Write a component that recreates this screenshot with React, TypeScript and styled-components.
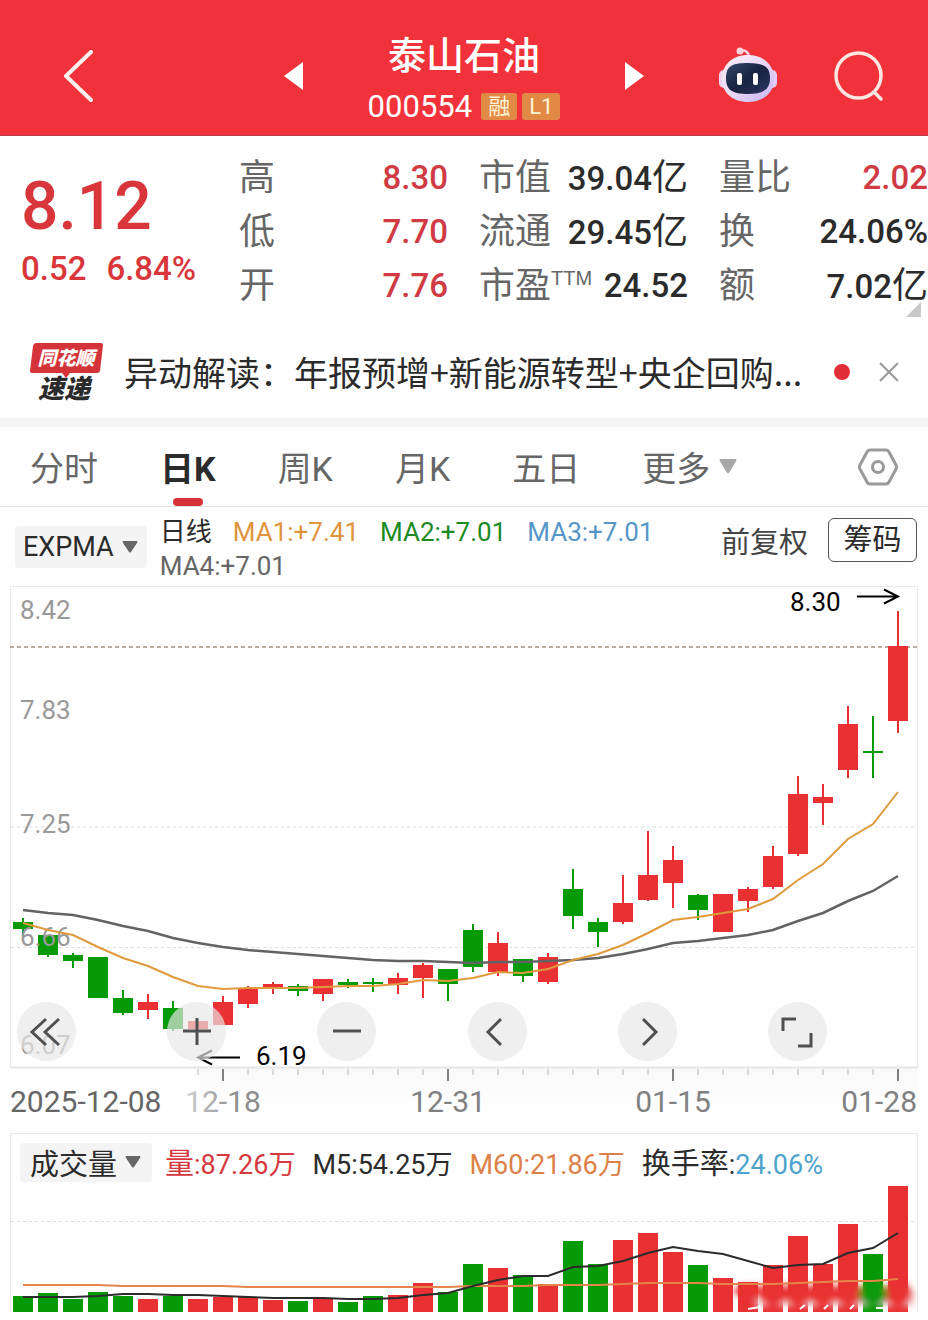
import React from "react";
import styled, { createGlobalStyle, css } from "styled-components";

const UP = "#e93033";
const DOWN = "#079a07";
const GREY = "#666666";
const INK = "#2b2b2b";

const GlobalStyle = createGlobalStyle`
  *, *::before, *::after { box-sizing: border-box; }
  body { margin: 0; background: #fefefe; color: ${INK}; font-family: Roboto, "Noto Sans CJK SC", sans-serif; }
  button { margin: 0; padding: 0; border: 0; background: none; color: inherit; font: inherit; cursor: pointer; }
  h1, dl, dd, dt, p { margin: 0; font-weight: inherit; }
  svg { display: block; }
`;

/* ---------- header ---------- */

const Header = styled.header`
  display: grid;
  grid-template-columns: 1fr auto 1fr;
  align-items: center;
  height: 136px;
  padding: 16px 44px 0 62px;
  background: #f2323a;
  border-bottom: 1px solid #b8424a;
  color: #fff;
`;

const HeaderSide = styled.div<{ $end?: boolean }>`
  display: flex;
  align-items: center;
  gap: 56px;
  justify-content: ${(p) => (p.$end ? "flex-end" : "flex-start")};
`;

const HeaderCentre = styled.div`
  display: flex;
  align-items: center;
  gap: 64px;
  margin-right: 18px;
`;

const StockHeading = styled.div`
  display: flex;
  flex-direction: column;
  align-items: center;
  padding-top: 12px;
`;

const StockName = styled.h1`
  font-size: 38px;
  font-weight: 500;
  line-height: 50px;
`;

const StockCode = styled.div`
  display: flex;
  align-items: center;
  gap: 5px;
  font-size: 31px;
  line-height: 52px;
`;

const CodeText = styled.span`
  margin-right: 4px;
`;

const Tag = styled.span`
  min-width: 36px;
  padding: 0 7px;
  border-radius: 3px;
  background: #e08a45;
  color: #fff3d6;
  font-size: 22px;
  line-height: 27px;
  text-align: center;
`;

/* ---------- quote ---------- */

const Quote = styled.section`
  position: relative;
  display: grid;
  grid-template-columns: 187px 1fr 1fr 1fr;
  gap: 31px;
  padding: 15px 0 13px 21px;
`;

const PriceBlock = styled.div`
  padding-top: 20px;
  color: #d9363b;
`;

const Price = styled.p`
  font-size: 66px;
  font-weight: 500;
  line-height: 72px;
`;

const Change = styled.p`
  display: flex;
  gap: 20px;
  font-size: 33px;
  font-weight: 500;
  line-height: 52px;
  white-space: nowrap;
`;

const StatColumn = styled.dl`
  min-width: 0;
`;

const StatRow = styled.div`
  display: flex;
  justify-content: space-between;
  align-items: center;
  height: 54px;
  white-space: nowrap;
`;

const StatLabel = styled.dt`
  display: flex;
  color: ${GREY};
  font-size: 36px;
  line-height: 54px;
`;

const Superscript = styled.sup`
  font-family: "Liberation Sans", sans-serif;
  font-size: 20px;
  line-height: 38px;
`;

const StatValue = styled.dd<{ $up?: boolean }>`
  color: ${(p) => (p.$up ? "#d03a42" : INK)};
  font-size: 33px;
  font-weight: 500;
  line-height: 54px;
`;

const Unit = styled.span`
  font-size: 36px;
  font-weight: 400;
`;

const ExpandCorner = styled.svg`
  position: absolute;
  right: 7px;
  bottom: 9px;
`;

/* ---------- news ---------- */

const News = styled.section`
  display: flex;
  align-items: center;
  height: 92px;
  padding: 0 28px 0 29px;
`;

const NewsLogo = styled.svg`
  flex: none;
`;

const NewsLink = styled.a`
  flex: 1;
  min-width: 0;
  margin-left: 20px;
  overflow: hidden;
  color: ${INK};
  font-family: "Noto Sans CJK SC", sans-serif;
  font-size: 34px;
  line-height: 50px;
  text-decoration: none;
  white-space: nowrap;
`;

const UnreadDot = styled.span`
  flex: none;
  width: 16px;
  height: 16px;
  margin: 0 28px 0 20px;
  border-radius: 50%;
  background: #e22f36;
`;

/* ---------- period tabs ---------- */

const Tabs = styled.nav`
  display: flex;
  align-items: center;
  gap: 62px;
  height: 89px;
  padding: 0 30px;
  border-top: 9px solid #f5f5f5;
  border-bottom: 1px solid #e2e2e2;
`;

const Tab = styled.button<{ $active?: boolean }>`
  position: relative;
  display: flex;
  align-items: center;
  gap: 9px;
  height: 79px;
  color: ${GREY};
  font-size: 34px;
  white-space: nowrap;
  ${(p) =>
    p.$active &&
    css`
      color: ${INK};
      font-weight: 700;
      &::after {
        content: "";
        position: absolute;
        left: 50%;
        bottom: 0;
        width: 30px;
        height: 8px;
        margin-left: -15px;
        border-radius: 4px;
        background: #d5333a;
      }
    `}
`;

const SettingsButton = styled.button`
  margin-left: auto;
`;

/* ---------- indicator bar ---------- */

const IndicatorBar = styled.div`
  display: flex;
  align-items: center;
  height: 79px;
  padding: 0 11px 0 15px;
`;

const Picker = styled.button`
  display: flex;
  flex: none;
  align-items: center;
  gap: 8px;
  border-radius: 4px;
  background: #f4f4f4;
  color: ${INK};
`;

const ExpmaPicker = styled(Picker)`
  height: 42px;
  padding: 0 9px 0 8px;
  font-size: 27px;
`;

const VolumePicker = styled(Picker)`
  height: 39px;
  padding: 0 11px 0 10px;
  font-size: 29px;
`;

const Averages = styled.div`
  display: flex;
  flex: 1;
  flex-wrap: wrap;
  column-gap: 21px;
  margin-left: 13px;
  padding-top: 4px;
  font-size: 26px;
  line-height: 34px;
`;

const Reading = styled.span<{ $color: string }>`
  color: ${(p) => p.$color};
  white-space: nowrap;
`;

const ChartActions = styled.div`
  display: flex;
  align-items: center;
  align-self: flex-start;
  gap: 20px;
  margin-top: 11px;
  font-size: 29px;
`;

const Adjust = styled.button`
  color: #444;
`;

const ChipsButton = styled.button`
  width: 89px;
  height: 44px;
  border: 1px solid #555;
  border-radius: 6px;
  line-height: 42px;
`;

/* ---------- charts ---------- */

const PricePanel = styled.section`
  position: relative;
  margin: 0 10px;
`;

const Plot = styled.svg`
  width: 100%;
  height: auto;
`;

const ChartControls = styled.div`
  position: absolute;
  top: 416px;
  left: 7px;
  right: 91px;
  display: flex;
  justify-content: space-between;
`;

const RoundButton = styled.button`
  display: flex;
  align-items: center;
  justify-content: center;
  width: 59px;
  height: 59px;
  border-radius: 50%;
  background: rgba(232, 232, 232, 0.68);
`;

const VolumePanel = styled.section`
  margin: 0 10px 8px;
  border: 1px solid #e8e8e8;
  border-bottom: 0;
`;

const VolumeLegend = styled.div`
  display: flex;
  align-items: center;
  gap: 13px;
  height: 54px;
  padding: 2px 9px 0;
  white-space: nowrap;
`;

const VolumeReadings = styled.div`
  display: flex;
  align-items: baseline;
  gap: 17px;
  padding-bottom: 3px;
  font-size: 27px;
`;

const ReadingLabel = styled.span`
  font-size: 29px;
`;

/* Candle rows in plot units: [open/close top, bottom, high, low, direction] */
type Candle = [number, number, number, number, 0 | 1];

const candles: Candle[] = [
  [922, 929, 918, 936, 0], [935, 955, 935, 957, 0], [955, 961, 953, 968, 0], [957, 998, 957, 998, 0],
  [998, 1013, 990, 1015, 0], [1002, 1010, 994, 1019, 1], [1008, 1029, 1001, 1031, 0], [1021, 1029, 1021, 1029, 1],
  [1002, 1025, 996, 1025, 1], [989, 1004, 986, 1008, 1], [984, 987, 982, 994, 1], [986, 991, 984, 996, 0],
  [979, 994, 979, 1001, 1], [982, 985, 979, 988, 0], [982, 984, 978, 992, 0], [978, 985, 973, 994, 1],
  [965, 978, 963, 998, 1], [969, 984, 969, 1001, 0], [930, 967, 924, 972, 0], [943, 972, 932, 976, 1],
  [959, 976, 959, 982, 0], [957, 982, 953, 984, 1], [889, 916, 869, 929, 0], [922, 932, 918, 947, 0],
  [903, 922, 875, 924, 1], [875, 900, 831, 901, 1], [860, 883, 846, 908, 1], [895, 910, 894, 920, 0],
  [894, 932, 894, 932, 1], [889, 901, 887, 912, 1], [856, 887, 846, 889, 1], [794, 854, 776, 856, 1],
  [797, 803, 784, 825, 1], [724, 770, 706, 778, 1], [751, 753, 716, 778, 0], [646, 721, 611, 733, 1],
];

const fastLine = [
  923, 930, 935, 947, 958, 966, 977, 986, 989, 988, 988, 988, 987, 986, 986, 984, 980, 981, 978, 972, 973, 969, 960,
  954, 945, 933, 920, 917, 913, 909, 899, 880, 864, 839, 824, 792,
];
const slowLine = [
  910, 913, 915, 920, 926, 931, 938, 943, 947, 950, 952, 954, 956, 958, 960, 961, 961, 962, 963, 962, 962, 961, 960,
  958, 954, 949, 943, 941, 938, 935, 930, 921, 913, 901, 891, 876,
];
const volumeTops = [
  1296, 1293, 1299, 1292, 1296, 1299, 1296, 1299, 1297, 1297, 1300, 1301, 1298, 1302, 1296, 1295, 1283, 1292, 1264,
  1268, 1275, 1284, 1241, 1264, 1240, 1233, 1252, 1265, 1278, 1282, 1265, 1236, 1264, 1224, 1254, 1186,
];
const volumeFast = [
  1297, 1297, 1297, 1296, 1294, 1294, 1295, 1295, 1296, 1297, 1298, 1298, 1298, 1299, 1299, 1298, 1295, 1293, 1286,
  1280, 1276, 1276, 1267, 1266, 1261, 1253, 1247, 1251, 1254, 1261, 1268, 1265, 1264, 1253, 1248, 1233,
];
const volumeSlow = [
  1285, 1285, 1285, 1285, 1286, 1286, 1286, 1286, 1286, 1287, 1287, 1287, 1287, 1287, 1287, 1287, 1287, 1287, 1286,
  1286, 1286, 1285, 1285, 1285, 1284, 1283, 1283, 1283, 1284, 1284, 1284, 1283, 1282, 1281, 1281, 1279,
];

const slotX = (i: number) => Math.round(22.5 + 25.015 * i);
const toPoints = (ys: number[]) => ys.map((y, i) => `${slotX(i)},${y}`).join(" ");

const priceLabels: [string, number][] = [["8.42", 619], ["7.83", 719], ["7.25", 833], ["6.66", 946], ["6.07", 1054]];
const dateLabels: [string, number, "start" | "middle" | "end", string][] = [
  ["2025-12-08", 10, "start", "#666"],
  ["12-18", 223, "middle", "url(#dateFade)"],
  ["12-31", 448, "middle", "#808080"],
  ["01-15", 673, "middle", "#808080"],
  ["01-28", 917, "end", "#808080"],
];
const majorTicks = [8, 17, 26, 35];
const digits = 'Roboto, "Noto Sans CJK SC", sans-serif';

function PriceChart() {
  return (
    <Plot viewBox="10 586 908 547" role="img" aria-label="日K线图">
      <defs>
        <linearGradient id="axisShade" x1="0" x2="0" y1="0" y2="1">
          <stop offset="0" stopColor="#f9f9f9" />
          <stop offset="1" stopColor="#fefefe" />
        </linearGradient>
        <linearGradient id="dateFade" x1="0" x2="1" y1="0" y2="0">
          <stop offset="0" stopColor="#cfcfcf" />
          <stop offset="0.7" stopColor="#8c8c8c" />
        </linearGradient>
      </defs>
      <rect x="200" y="1068" width="718" height="40" fill="url(#axisShade)" />
      <path d="M10.5 1068V586.5H917.5V1068" fill="none" stroke="#e8e8e8" />
      <path d="M10 1067.5H918" stroke="#e6e6e6" strokeWidth="2" />
      <path d="M11 827H917M11 947.5H917" stroke="#dedede" strokeDasharray="3 3" />
      {candles.map(([top, bottom, high, low, up], i) => (
        <g key={i} fill={up ? UP : DOWN}>
          <rect x={slotX(i) - 1} y={high} width="2" height={low - high} />
          <rect x={slotX(i) - 10} y={top} width="20" height={bottom - top} />
        </g>
      ))}
      {priceLabels.map(([label, y]) => (
        <text key={label} x="20" y={y} fontFamily={digits} fontSize="26" fill="#999">
          {label}
        </text>
      ))}
      <path d="M10 647H917" stroke="#b8aba0" strokeWidth="2" strokeDasharray="4 3" />
      <rect x="888" y="646" width="20" height="75" fill={UP} />
      <polyline points={toPoints(slowLine)} fill="none" stroke="#636363" strokeWidth="2.5" />
      <polyline points={toPoints(fastLine)} fill="none" stroke="#e09a3e" strokeWidth="2" />
      <g fontFamily={digits} fontSize="26" fill="#000">
        <text x="790" y="611">8.30</text>
        <text x="256" y="1065">6.19</text>
      </g>
      <path d="M857 596.5H897M884 589.5L898 596.5L884 603.5M240 1057.5H199M212 1050.5L198 1057.5L212 1064.5" fill="none" stroke="#000" strokeWidth="2" />
      {candles.map((_, i) =>
        i < 7 ? null : (
          <path
            key={i}
            d={`M${slotX(i)} 1069v${majorTicks.includes(i) ? 12 : 6}`}
            stroke={majorTicks.includes(i) ? "#808080" : "#b5b5b5"}
            strokeWidth={majorTicks.includes(i) ? 2 : 1}
          />
        ),
      )}
      {dateLabels.map(([label, x, anchor, fill]) => (
        <text key={label} x={x} y="1112" textAnchor={anchor} fontFamily={digits} fontSize="30" fill={fill}>
          {label}
        </text>
      ))}
    </Plot>
  );
}

function VolumeChart() {
  return (
    <Plot viewBox="11 1188 906 124" role="img" aria-label="成交量" overflow="visible">
      <defs>
        <filter id="soften" x="-20%" y="-40%" width="140%" height="180%">
          <feGaussianBlur stdDeviation="3" />
        </filter>
      </defs>
      <path d="M11 1221.5H917" stroke="#dedede" strokeDasharray="3 3" />
      {volumeTops.map((top, i) => (
        <rect key={i} x={slotX(i) - 10} y={top} width="20" height={1312 - top} fill={candles[i][4] ? UP : DOWN} />
      ))}
      <g filter="url(#soften)">
        <path d="M755 1300L915 1290V1306H755Z" fill="#f3d8d8" />
        {[748, 773, 798, 823, 848, 898, 873].map((x) => (
          <ellipse key={x} cx={x} cy={x === 748 ? 1291 : 1294} rx="14" ry={x === 748 ? 6 : 12} fill={x === 873 ? DOWN : UP} />
        ))}
      </g>
      <path d="M748 1309l12-2M800 1309l5-4M824 1309l4-4M850 1309l4-4M876 1308l12 0" stroke="#fff" strokeWidth="2" fill="none" />
      <polyline points={toPoints(volumeSlow)} fill="none" stroke="#e5854c" strokeWidth="2" />
      <polyline points={toPoints(volumeFast)} fill="none" stroke="#2b2b2b" strokeWidth="2" />
    </Plot>
  );
}

function Caret({ width, height, color }: { width: number; height: number; color: string }) {
  return (
    <svg width={width} height={height} viewBox="0 0 16 12" preserveAspectRatio="none" aria-hidden="true">
      <path d="M1 0H15Q16 0 15 2L9 11Q8 12 7 11L1 2Q0 0 1 0Z" fill={color} />
    </svg>
  );
}

function Robot() {
  return (
    <svg width="60" height="58" viewBox="0 0 60 58" aria-hidden="true">
      <defs>
        <linearGradient id="shell" x1="0" y1="0" x2="1" y2="1">
          <stop offset="0" stopColor="#fff0f6" />
          <stop offset="0.5" stopColor="#e9d8f5" />
          <stop offset="1" stopColor="#c5b4f5" />
        </linearGradient>
        <linearGradient id="visor" x1="0" y1="0" x2="1" y2="1">
          <stop offset="0" stopColor="#36466b" />
          <stop offset="0.5" stopColor="#17233f" />
          <stop offset="1" stopColor="#2d3666" />
        </linearGradient>
      </defs>
      <path d="M22 4Q30 2 31 10" fill="none" stroke="#ffd3de" strokeWidth="2.5" />
      <circle cx="22" cy="4" r="3.5" fill="#ffd3de" />
      <rect x="1" y="23" width="10" height="18" rx="5" fill="#f0d3ee" />
      <rect x="49" y="23" width="10" height="18" rx="5" fill="#e3cdf5" />
      <path d="M30 8C46 8 56 18 56 32S45 55 30 55S4 46 4 32S14 8 30 8Z" fill="url(#shell)" />
      <path d="M30 16C46 16 52 20 52 31S46 47 30 47S8 43 8 31S14 16 30 16Z" fill="url(#visor)" />
      <rect x="19" y="26" width="5" height="12" rx="2" fill="#fff" />
      <rect x="35" y="26" width="5" height="12" rx="2" fill="#fff" />
    </svg>
  );
}

const controls: [string, string][] = [
  ["最早", "M33 8L19 21L33 34M20 8L6 21L20 34"],
  ["放大", "M21 7V34M7 20H35"],
  ["缩小", "M7 20H35"],
  ["向左", "M25 8L12 21L25 34"],
  ["向右", "M17 8L30 21L17 34"],
  ["全屏", "M7 20V8H20M22 35H35V22"],
];

type Stat = { label: string; sup?: string; value: string; unit?: string; up?: boolean };

const stats: Stat[][] = [
  [
    { label: "高", value: "8.30", up: true },
    { label: "低", value: "7.70", up: true },
    { label: "开", value: "7.76", up: true },
  ],
  [
    { label: "市值", value: "39.04", unit: "亿" },
    { label: "流通", value: "29.45", unit: "亿" },
    { label: "市盈", sup: "TTM", value: "24.52" },
  ],
  [
    { label: "量比", value: "2.02", up: true },
    { label: "换", value: "24.06%" },
    { label: "额", value: "7.02", unit: "亿" },
  ],
];

export default function App() {
  return (
    <>
      <GlobalStyle />
      <Header>
        <HeaderSide>
          <button aria-label="返回">
            <svg width="32" height="52" viewBox="0 0 32 52">
              <path d="M29 2L4 26L29 50" fill="none" stroke="#fff0ee" strokeWidth="4" strokeLinecap="round" strokeLinejoin="round" />
            </svg>
          </button>
        </HeaderSide>
        <HeaderCentre>
          <button aria-label="上一只">
            <svg width="20" height="30" viewBox="0 0 20 30">
              <path d="M19 1V29L0 15Z" fill="#fff" />
            </svg>
          </button>
          <StockHeading>
            <StockName>泰山石油</StockName>
            <StockCode>
              <CodeText>000554</CodeText>
              <Tag>融</Tag>
              <Tag>L1</Tag>
            </StockCode>
          </StockHeading>
          <button aria-label="下一只">
            <svg width="20" height="30" viewBox="0 0 20 30">
              <path d="M1 1V29L20 15Z" fill="#fff" />
            </svg>
          </button>
        </HeaderCentre>
        <HeaderSide $end>
          <button aria-label="智能助手">
            <Robot />
          </button>
          <button aria-label="搜索">
            <svg width="50" height="50" viewBox="0 0 50 50">
              <g fill="none" stroke="#ffe6e0" strokeWidth="3.5" strokeLinecap="round">
                <circle cx="24.5" cy="24.5" r="22.5" />
                <path d="M40 41L47 48" />
              </g>
            </svg>
          </button>
        </HeaderSide>
      </Header>

      <Quote>
        <PriceBlock>
          <Price>8.12</Price>
          <Change>
            <span>0.52</span>
            <span>6.84%</span>
          </Change>
        </PriceBlock>
        {stats.map((column, i) => (
          <StatColumn key={i}>
            {column.map((stat) => (
              <StatRow key={stat.label}>
                <StatLabel>
                  {stat.label}
                  {stat.sup && <Superscript>{stat.sup}</Superscript>}
                </StatLabel>
                <StatValue $up={stat.up}>
                  {stat.value}
                  {stat.unit && <Unit>{stat.unit}</Unit>}
                </StatValue>
              </StatRow>
            ))}
          </StatColumn>
        ))}
        <ExpandCorner width="15" height="15" viewBox="0 0 15 15" aria-hidden="true">
          <path d="M15 0V15H0Z" fill="#c8c8c8" />
        </ExpandCorner>
      </Quote>

      <News>
        <NewsLogo width="75" height="74" viewBox="0 -6 75 74" aria-label="同花顺速递">
          <path d="M7 2H72Q74 2 74 4L71 30Q70 32 68 32H41L37 37L33 32H3Q1 32 1 30L4 5Q5 2 7 2Z" fill="#d5333a" />
          <g fontFamily='"Noto Sans CJK SC", sans-serif' fontWeight="900" fontStyle="italic" textAnchor="middle">
            <text x="37" y="24" fontSize="19" fill="#fff">同花顺</text>
            <text x="35" y="57" fontSize="26" fill={INK}>速递</text>
          </g>
        </NewsLogo>
        <NewsLink href="#news">异动解读：年报预增+新能源转型+央企回购...</NewsLink>
        <UnreadDot />
        <button aria-label="关闭">
          <svg width="22" height="22" viewBox="0 0 22 22">
            <path d="M2 2L20 20M20 2L2 20" stroke="#999" strokeWidth="2" />
          </svg>
        </button>
      </News>

      <Tabs>
        <Tab>分时</Tab>
        <Tab $active>日K</Tab>
        <Tab>周K</Tab>
        <Tab>月K</Tab>
        <Tab>五日</Tab>
        <Tab>
          更多
          <Caret width={18} height={15} color="#a8a8a8" />
        </Tab>
        <SettingsButton aria-label="设置">
          <svg width="40" height="40" viewBox="0 0 40 40">
            <g fill="none" stroke="#999" strokeWidth="3">
              <path d="M12 3H28Q30 3 31 5L38 18Q39 20 38 22L31 35Q30 37 28 37H12Q10 37 9 35L2 22Q1 20 2 18L9 5Q10 3 12 3Z" />
              <circle cx="20" cy="20" r="5.5" />
            </g>
          </svg>
        </SettingsButton>
      </Tabs>

      <IndicatorBar>
        <ExpmaPicker>
          EXPMA
          <Caret width={16} height={12} color={GREY} />
        </ExpmaPicker>
        <Averages>
          <Reading $color={INK}>日线</Reading>
          <Reading $color="#e0943c">MA1:+7.41</Reading>
          <Reading $color="#1d8a24">MA2:+7.01</Reading>
          <Reading $color="#5596c8">MA3:+7.01</Reading>
          <Reading $color={GREY}>MA4:+7.01</Reading>
        </Averages>
        <ChartActions>
          <Adjust>前复权</Adjust>
          <ChipsButton>筹码</ChipsButton>
        </ChartActions>
      </IndicatorBar>

      <PricePanel>
        <PriceChart />
        <ChartControls>
          {controls.map(([label, path]) => (
            <RoundButton key={label} aria-label={label}>
              <svg width="42" height="42" viewBox="0 0 42 42">
                <path d={path} fill="none" stroke="#505050" strokeWidth="3" />
              </svg>
            </RoundButton>
          ))}
        </ChartControls>
      </PricePanel>

      <VolumePanel>
        <VolumeLegend>
          <VolumePicker>
            成交量
            <Caret width={16} height={12} color={GREY} />
          </VolumePicker>
          <VolumeReadings>
            <Reading $color="#d5393f">
              <ReadingLabel>量</ReadingLabel>:87.26万
            </Reading>
            <Reading $color={INK}>M5:54.25万</Reading>
            <Reading $color="#dd8047">M60:21.86万</Reading>
            <span>
              <ReadingLabel>换手率</ReadingLabel>:<Reading $color="#4da3cc">24.06%</Reading>
            </span>
          </VolumeReadings>
        </VolumeLegend>
        <VolumeChart />
      </VolumePanel>
    </>
  );
}
